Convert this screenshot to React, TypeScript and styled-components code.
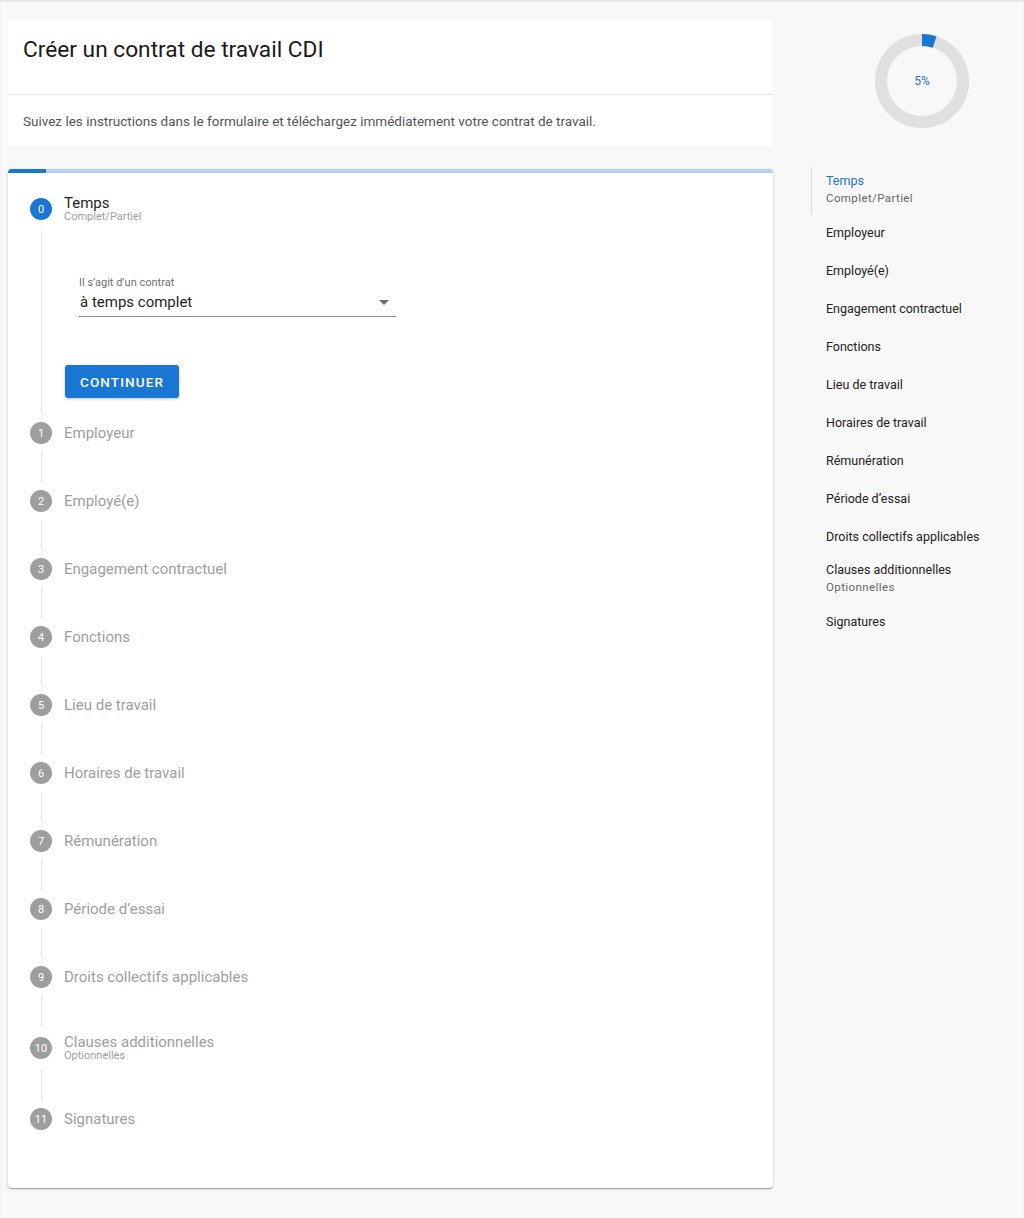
import React from "react";
import styled, { createGlobalStyle } from "styled-components";

const GlobalStyle = createGlobalStyle`
	html, body {
		margin: 0;
		padding: 0;
		background: #f8f8f8;
		font-family: Roboto, "Noto Sans", "Liberation Sans", Arial, sans-serif;
		color: #212121;
	}
	* { box-sizing: border-box; }
`;

type Step = { label: string; sub?: string };

const STEPS: Step[] = [
	{ label: "Temps", sub: "Complet/Partiel" },
	{ label: "Employeur" },
	{ label: "Employé(e)" },
	{ label: "Engagement contractuel" },
	{ label: "Fonctions" },
	{ label: "Lieu de travail" },
	{ label: "Horaires de travail" },
	{ label: "Rémunération" },
	{ label: "Période d’essai" },
	{ label: "Droits collectifs applicables" },
	{ label: "Clauses additionnelles", sub: "Optionnelles" },
	{ label: "Signatures" },
];

const ACTIVE = 0;
const PROGRESS = 5;

const Page = styled.div`
	min-height: 100vh;
	display: flex;
	align-items: flex-start;
	padding: 19px 0 30px 8px;
	box-shadow: inset 0 2px 3px -1px rgba(0, 0, 0, 0.14);
`;

const Main = styled.main`
	width: 765px;
	flex-shrink: 0;
	display: flex;
	flex-direction: column;
	gap: 23px;
`;

const HeaderCard = styled.section`
	background: #fff;
	border-radius: 4px;
`;

const Title = styled.h1`
	margin: 0;
	height: 76px;
	padding: 16px 15px 0;
	font-size: 22.7px;
	line-height: 30px;
	font-weight: 400;
	color: #1a1a1a;
	border-bottom: 1px solid #e4e4e4;
`;

const Intro = styled.p`
	margin: 0;
	height: 51px;
	padding: 1px 15px 0;
	display: flex;
	align-items: center;
	font-size: 13.5px;
	color: #555;
`;

const StepperCard = styled.section`
	background: #fff;
	border-radius: 4px;
	overflow: hidden;
	box-shadow: 0 1px 3px rgba(0, 0, 0, 0.2), 0 1px 1px rgba(0, 0, 0, 0.14),
		0 2px 1px -1px rgba(0, 0, 0, 0.12);
`;

const ProgressTrack = styled.div`
	height: 4px;
	background: #b5d3f1;
`;

const ProgressFill = styled.div`
	height: 100%;
	background: #1976d2;
`;

const StepList = styled.ol`
	list-style: none;
	margin: 0;
	padding: 22px 0 58px 22px;
`;

const StepHeader = styled.div`
	display: flex;
	align-items: center;
	gap: 12px;
`;

const StepIcon = styled.span<{ $active: boolean }>`
	width: 22px;
	height: 22px;
	border-radius: 50%;
	flex-shrink: 0;
	display: flex;
	align-items: center;
	justify-content: center;
	font-size: 11px;
	color: #fff;
	background: ${(p) => (p.$active ? "#1976d2" : "#9e9e9e")};
`;

const LabelBox = styled.div`
	display: flex;
	flex-direction: column;
`;

const StepLabel = styled.span<{ $active: boolean }>`
	font-size: 15px;
	line-height: 16px;
	color: ${(p) => (p.$active ? "#1f1f1f" : "#9e9e9e")};
`;

const StepSub = styled.span`
	font-size: 11px;
	line-height: 12px;
	color: #a0a0a0;
`;

const Connector = styled.div`
	margin: 8px 0 8px 11px;
	height: 30px;
	border-left: 1px solid #e3e3e3;
`;

const StepContent = styled.div`
	margin: 8px 0 8px 11px;
	border-left: 1px solid #e3e3e3;
	padding: 44px 0 16px 23px;
`;

const SelectField = styled.div`
	margin-left: 14px;
	width: 317px;
`;

const SelectLabel = styled.label`
	display: block;
	font-size: 11px;
	line-height: 16px;
	color: #6f6f6f;
`;

const SelectBox = styled.div`
	display: flex;
	align-items: center;
	justify-content: space-between;
	padding: 1px 7px 4px 1px;
	border-bottom: 1px solid #8a8a8a;
	font-size: 15px;
	line-height: 20px;
	color: #1f1f1f;
`;

const Caret = styled.span`
	width: 0;
	height: 0;
	border-left: 5px solid transparent;
	border-right: 5px solid transparent;
	border-top: 5px solid #6b6b6b;
`;

const Button = styled.button`
	margin-top: 48px;
	width: 114px;
	height: 33px;
	border: none;
	border-radius: 3px;
	background: #1976d2;
	color: #fff;
	font-family: inherit;
	font-size: 13.5px;
	font-weight: 500;
	letter-spacing: 1.1px;
	box-shadow: 0 1px 3px rgba(0, 0, 0, 0.25);
	cursor: pointer;
`;

const Aside = styled.aside`
	flex: 1;
	padding: 15px 0 0 38px;
`;

const DonutWrap = styled.div`
	position: relative;
	width: 94px;
	height: 94px;
	margin-left: 64px;
`;

const DonutText = styled.span`
	position: absolute;
	inset: 0;
	display: flex;
	align-items: center;
	justify-content: center;
	font-size: 12px;
	color: #1976d2;
`;

const Nav = styled.nav`
	margin-top: 39px;
	display: flex;
	flex-direction: column;
`;

const NavItem = styled.a<{ $active: boolean; $double: boolean }>`
	display: flex;
	flex-direction: column;
	padding: ${(p) => (p.$double ? "6px 0 7px 14px" : "11px 0 11px 14px")};
	border-left: 1px solid ${(p) => (p.$active ? "#dcdcdc" : "transparent")};
	text-decoration: none;
`;

const NavLabel = styled.span<{ $active: boolean }>`
	font-size: 12.5px;
	line-height: 16px;
	color: ${(p) => (p.$active ? "#1976d2" : "#222")};
`;

const NavSub = styled.span`
	font-size: 11.5px;
	line-height: 18px;
	letter-spacing: 0.4px;
	color: #666;
`;

const Donut: React.FC<{ value: number }> = ({ value }) => {
	const r = 41;
	const c = 2 * Math.PI * r;
	return (
		<DonutWrap>
			<svg width="94" height="94" viewBox="0 0 94 94">
				<circle cx="47" cy="47" r={r} fill="none" stroke="#e0e0e0" strokeWidth="12" />
				<circle
					cx="47"
					cy="47"
					r={r}
					fill="none"
					stroke="#1976d2"
					strokeWidth="12"
					strokeDasharray={`${(c * value) / 100} ${c}`}
					transform="rotate(-90 47 47)"
				/>
			</svg>
			<DonutText>{value}%</DonutText>
		</DonutWrap>
	);
};

const App: React.FC = () => {
	return (
		<>
			<GlobalStyle />
			<Page>
				<Main>
					<HeaderCard>
						<Title>Créer un contrat de travail CDI</Title>
						<Intro>
							Suivez les instructions dans le formulaire et téléchargez immédiatement
							votre contrat de travail.
						</Intro>
					</HeaderCard>
					<StepperCard>
						<ProgressTrack>
							<ProgressFill style={{ width: `${PROGRESS}%` }} />
						</ProgressTrack>
						<StepList>
							{STEPS.map((step, index) => (
								<li key={step.label}>
									<StepHeader>
										<StepIcon $active={index === ACTIVE}>{index}</StepIcon>
										<LabelBox>
											<StepLabel $active={index === ACTIVE}>{step.label}</StepLabel>
											{step.sub && <StepSub>{step.sub}</StepSub>}
										</LabelBox>
									</StepHeader>
									{index === ACTIVE ? (
										<StepContent>
											<SelectField>
												<SelectLabel>Il s’agit d’un contrat</SelectLabel>
												<SelectBox>
													<span>à temps complet</span>
													<Caret />
												</SelectBox>
											</SelectField>
											<Button>CONTINUER</Button>
										</StepContent>
									) : (
										index < STEPS.length - 1 && <Connector />
									)}
								</li>
							))}
						</StepList>
					</StepperCard>
				</Main>
				<Aside>
					<Donut value={PROGRESS} />
					<Nav>
						{STEPS.map((step, index) => (
							<NavItem
								key={step.label}
								href="#"
								$active={index === ACTIVE}
								$double={!!step.sub}>
								<NavLabel $active={index === ACTIVE}>{step.label}</NavLabel>
								{step.sub && <NavSub>{step.sub}</NavSub>}
							</NavItem>
						))}
					</Nav>
				</Aside>
			</Page>
		</>
	);
};

export default App;
